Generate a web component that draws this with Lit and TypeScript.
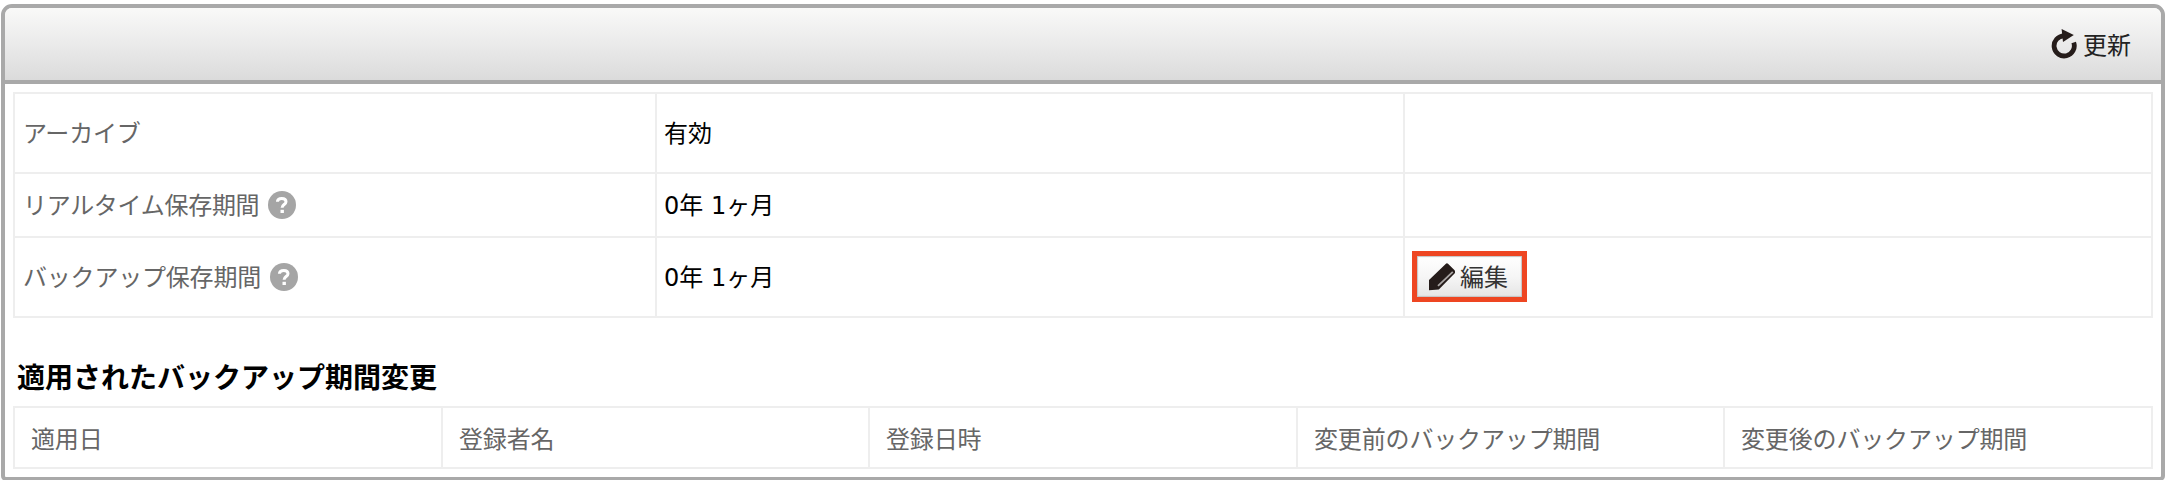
import { LitElement, html, css } from "lit";
import { customElement, property } from "lit/decorators.js";

@customElement("help-icon")
class HelpIcon extends LitElement {
  static styles = css`
    :host { display: block; width: 28px; height: 28px; }
    svg { display: block; }
  `;
  render() {
    return html`<svg width="28" height="28" viewBox="0 0 28 28">
      <circle cx="14" cy="14" r="14" fill="#a5a5a5" />
      <path d="M9.4 10.8C9.5 8.4 11.3 7.4 13.8 7.4c2.6 0 4.2 1.2 4.2 3.3 0 2.8-3.9 2.9-3.9 6" fill="none" stroke="#fff" stroke-width="3" />
      <rect x="12.5" y="18.8" width="3.4" height="3.2" fill="#fff" />
    </svg>`;
  }
}

@customElement("tool-icon")
class ToolIcon extends LitElement {
  @property() name = "";
  static styles = css`
    :host { display: block; }
    svg { display: block; }
  `;
  render() {
    return this.name === "refresh"
      ? html`<svg width="26" height="30" viewBox="0 0 26 30">
          <path d="M13 6.8A10.1 10.1 0 1 0 22.7 13.5" fill="none" stroke="#251c1a" stroke-width="4.8" />
          <path d="M10.6 0 22.8 6 12 13z" fill="#251c1a" />
        </svg>`
      : html`<svg width="27" height="28" viewBox="0 0 27 28">
          <path d="M0 17 17.2 .6Q18.2 0 19 .8L25.6 7.2Q26.2 8 26 10L9.8 26.6 0 27.2z" fill="#251c1a" />
          <path d="M9 22.8 23.8 8.8" fill="none" stroke="#aaa6a5" stroke-width="1.8" />
        </svg>`;
  }
}

@customElement("app-root")
class AppRoot extends LitElement {
  static styles = css`
    :host {
      display: block;
      box-sizing: border-box;
      height: 480px;
      overflow: hidden;
      padding: 4px 0 0 1px;
      background: #fff;
      color: #000;
      font: 24px/36px "Noto Sans CJK JP", sans-serif;
    }
    .panel {
      box-sizing: border-box;
      height: 477px;
      border: 4px solid #a9a9a9;
      border-radius: 11px 11px 5px 5px;
      background: #fff;
      overflow: hidden;
    }
    .bar {
      display: flex;
      align-items: center;
      justify-content: flex-end;
      height: 72px;
      padding-right: 30px;
      border-bottom: 4px solid #a9a9a9;
      background: linear-gradient(#f9f9f8, #e9e9e9 55%, #dbdbdb);
    }
    .refresh { display: flex; align-items: center; gap: 6px; color: #222; }
    .body { padding: 8px; }
    .grid { display: grid; border: 2px solid #eee; }
    .settings { grid-template-columns: 640px 746px 1fr; grid-template-rows: 78px 62px 78px; gap: 2px; background: #eee; }
    .cell { display: flex; align-items: center; background: #fff; padding: 0 8px; gap: 9px; }
    .label { color: #666; letter-spacing: -0.2px; }
    .label span { padding-bottom: 2px; }
    .tight { letter-spacing: -0.3px; }
    .value { font-family: "DejaVu Sans", "Noto Sans CJK JP", sans-serif; padding: 2px 0 0 7px; }
    .last { padding: 0 0 1px 7px; }
    h2 { margin: 0; padding: 37px 0 9px 4px; font-size: 28px; line-height: 42px; font-weight: 700; }
    .history { grid-template-columns: 426px 427px 428px 427px 1fr; }
    .head { display: flex; align-items: center; height: 59px; padding-left: 16px; color: #666; letter-spacing: -0.15px; }
    .head + .head { border-left: 2px solid #eee; }
    .edit {
      display: flex;
      align-items: center;
      gap: 4px;
      box-sizing: border-box;
      width: 115px;
      height: 51px;
      padding: 0 0 0 12px;
      border: 5px solid #ee4622;
      background: linear-gradient(#fff, #f6f6f6 50%, #e5e5e5);
      box-shadow: inset 0 0 1px 1px #c4c4c4;
      color: #333;
      font: inherit;
    }
    .edit span { padding-bottom: 1px; }
  `;

  private rows = [
    { label: "アーカイブ", value: "有効", help: false, edit: false, tight: false },
    { label: "リアルタイム保存期間", value: "0年 1ヶ月", help: true, edit: false, tight: true },
    { label: "バックアップ保存期間", value: "0年 1ヶ月", help: true, edit: true, tight: false },
  ];
  private heads = ["適用日", "登録者名", "登録日時", "変更前のバックアップ期間", "変更後のバックアップ期間"];

  render() {
    return html`<div class="panel">
      <div class="bar"><div class="refresh"><tool-icon name="refresh"></tool-icon><span>更新</span></div></div>
      <div class="body">
        <div class="grid settings">
          ${this.rows.map((r) => html`
            <div class="cell label ${r.tight ? "tight" : ""}"><span>${r.label}</span>${r.help ? html`<help-icon></help-icon>` : ""}</div>
            <div class="cell value"><span>${r.value}</span></div>
            <div class="cell last">${r.edit ? html`<button class="edit"><tool-icon name="edit"></tool-icon><span>編集</span></button>` : ""}</div>`)}
        </div>
        <h2>適用されたバックアップ期間変更</h2>
        <div class="grid history">${this.heads.map((h) => html`<div class="head">${h}</div>`)}</div>
      </div>
    </div>`;
  }
}
